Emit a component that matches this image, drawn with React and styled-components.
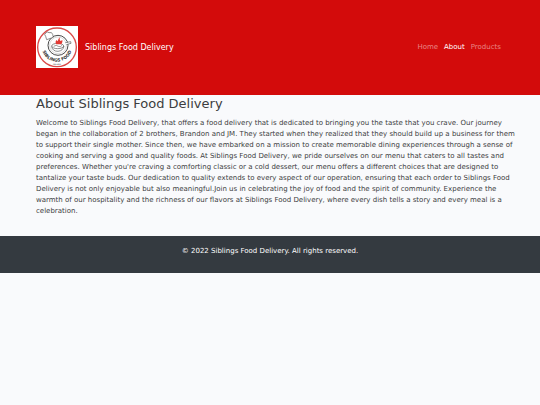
import React from "react";
import styled, { createGlobalStyle } from "styled-components";

function Logo() {
  return (
    <LogoImage viewBox="0 0 126 126" role="img" aria-label="Siblings Food">
      <defs>
        <path id="logo-arc" d="M17 61 A46 46 0 0 0 109 61" />
      </defs>
      <rect width="126" height="126" fill="#fff" />
      <circle cx="63" cy="64" r="58" fill="none" stroke="#d94a48" strokeWidth="4" />

      {/* pan */}
      <circle cx="66" cy="58" r="30" fill="none" stroke="#4a4a4a" strokeWidth="3" />
      <circle cx="66" cy="58" r="25" fill="none" stroke="#999" strokeWidth="1" />
      <path d="M88 50 L104 47 L105 52 L91 56" fill="#fff" stroke="#555" strokeWidth="2" />
      <ellipse cx="65" cy="60" rx="18" ry="8" fill="#fff" stroke="#555" strokeWidth="2" />
      <path d="M47 62 Q50 76 66 76 Q82 74 84 60" fill="none" stroke="#555" strokeWidth="2" />
      <path d="M53 61 Q61 55 67 61 Q73 65 78 58" fill="none" stroke="#666" strokeWidth="2" />

      {/* chef hat */}
      <path
        d="M32 41 L29 31 Q23 25 29 21 Q33 15 39 20 Q48 17 50 25 L52 34 Z"
        fill="#fff"
        stroke="#555"
        strokeWidth="2"
      />

      {/* flame */}
      <path
        d="M61 55 Q56 47 62 42 L65 46 Q67 38 71 34 Q70 42 74 45 L79 42 Q81 50 76 55 Z"
        fill="#e23b35"
      />

      <LogoText fontSize="13" fontWeight="700">
        <textPath href="#logo-arc" startOffset="50%" textAnchor="middle">
          SIBLINGS FOOD
        </textPath>
      </LogoText>
      <LogoText x="63" y="118" fontSize="5" textAnchor="middle">
        DELIVERY
      </LogoText>
    </LogoImage>
  );
}

function App() {
  return (
    <>
      <GlobalStyle />
      <Header>
        <Brand href="#home">
          <Logo />
          Siblings Food Delivery
        </Brand>
        <Nav>
          <NavLink href="#home">Home</NavLink>
          <NavLink href="#about" $active>About</NavLink>
          <NavLink href="#products">Products</NavLink>
        </Nav>
      </Header>
      <Content>
        <Title>About Siblings Food Delivery</Title>
        <Paragraph>
          Welcome to Siblings Food Delivery, that offers a food delivery that is dedicated to bringing you the taste that you crave. Our journey began in the collaboration of 2 brothers, Brandon and JM. They started when they realized that they should build up a business for them to support their single mother. Since then, we have embarked on a mission to create memorable dining experiences through a sense of cooking and serving a good and quality foods. At Siblings Food Delivery, we pride ourselves on our menu that caters to all tastes and preferences. Whether you're craving a comforting classic or a cold dessert, our menu offers a different choices that are designed to tantalize your taste buds. Our dedication to quality extends to every aspect of our operation, ensuring that each order to Siblings Food Delivery is not only enjoyable but also meaningful.Join us in celebrating the joy of food and the spirit of community. Experience the warmth of our hospitality and the richness of our flavors at Siblings Food Delivery, where every dish tells a story and every meal is a celebration.
        </Paragraph>
      </Content>
      <Footer>
        <FooterText>© 2022 Siblings Food Delivery. All rights reserved.</FooterText>
      </Footer>
    </>
  );
}

export default App;

const GlobalStyle = createGlobalStyle`
  * {
    box-sizing: border-box;
  }

  body {
    margin: 0;
    background-color: #f9fafc;
    color: #3c3d40;
    font-family: "DejaVu Sans", sans-serif;
  }
`;

const Header = styled.header`
  display: flex;
  align-items: center;
  justify-content: space-between;
  padding: 26px 39px 27px 36px;
  background-color: #d30b0b;
`;

const Brand = styled.a`
  display: flex;
  align-items: center;
  gap: 7px;
  color: #fff;
  font-size: 8px;
  text-decoration: none;
`;

const LogoImage = styled.svg`
  width: 42px;
  height: 42px;
`;

const LogoText = styled.text`
  fill: #333;
  font-family: "DejaVu Sans", sans-serif;
`;

const Nav = styled.nav`
  display: flex;
  gap: 6px;
`;

const NavLink = styled.a`
  color: ${(props) => (props.$active ? "#fff" : "#e98585")};
  font-size: 7px;
  line-height: 11px;
  text-decoration: none;
`;

const Content = styled.main`
  padding: 0 20px 19px 36px;
`;

const Title = styled.h1`
  margin: 0 0 6px;
  font-size: 13px;
  font-weight: 400;
  line-height: 17px;
`;

const Paragraph = styled.p`
  margin: 0;
  font-size: 7px;
  line-height: 11px;
`;

const Footer = styled.footer`
  padding: 10px 36px 16px;
  background-color: #343a40;
  color: #fff;
  text-align: center;
`;

const FooterText = styled.p`
  margin: 0;
  font-size: 7px;
  line-height: 11px;
`;
